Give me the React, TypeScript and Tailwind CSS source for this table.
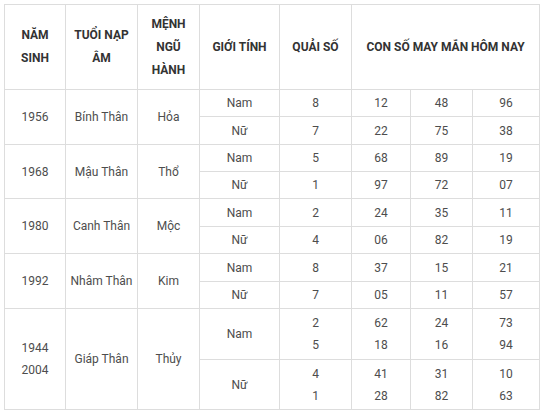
import React from 'react';

type Half = { q: string[]; n: string[][] };
type Row = {
  year: string[];
  nap: string;
  menh: string;
  nam: Half;
  nu: Half;
  h: [string, string];
};

const one = (q: string, a: string, b: string, c: string): Half => ({ q: [q], n: [[a], [b], [c]] });

const rows: Row[] = [
  { year: ['1956'], nap: 'Bính Thân', menh: 'Hỏa', nam: one('8', '12', '48', '96'), nu: one('7', '22', '75', '38'), h: ['h-[27px]', 'h-[28px]'] },
  { year: ['1968'], nap: 'Mậu Thân', menh: 'Thổ', nam: one('5', '68', '89', '19'), nu: one('1', '97', '72', '07'), h: ['h-[27px]', 'h-[27px]'] },
  { year: ['1980'], nap: 'Canh Thân', menh: 'Mộc', nam: one('2', '24', '35', '11'), nu: one('4', '06', '82', '19'), h: ['h-[28px]', 'h-[27px]'] },
  { year: ['1992'], nap: 'Nhâm Thân', menh: 'Kim', nam: one('8', '37', '15', '21'), nu: one('7', '05', '11', '57'), h: ['h-[28px]', 'h-[27px]'] },
  {
    year: ['1944', '2004'], nap: 'Giáp Thân', menh: 'Thủy',
    nam: { q: ['2', '5'], n: [['62', '18'], ['24', '16'], ['73', '94']] },
    nu: { q: ['4', '1'], n: [['41', '28'], ['31', '82'], ['10', '63']] },
    h: ['h-[51px]', 'h-[50px]'],
  },
];

const td = 'border border-[#dddddd] text-center align-middle px-1 py-0 leading-[22px]';
const th = 'border border-[#dddddd] text-center align-middle px-1 py-0 leading-[23px] font-bold text-[#333333]';

function Lines({ items }: { items: string[] }) {
  return (
    <>
      {items.map((t, i) => (
        <div key={i}>{t}</div>
      ))}
    </>
  );
}

export default function App() {
  return (
    <div className="bg-white w-[544px] h-[415px] pt-[4px] pl-[4px] font-['Roboto',sans-serif] text-[12px] text-[#4d4d4d]">
      <table className="table-fixed border-collapse w-[535px]">
        <colgroup>
          <col className="w-[61px]" />
          <col className="w-[72px]" />
          <col className="w-[62px]" />
          <col className="w-[80px]" />
          <col className="w-[72px]" />
          <col className="w-[59px]" />
          <col className="w-[62px]" />
          <col className="w-[67px]" />
        </colgroup>
        <thead>
          <tr className="h-[85px]">
            <th className={th}>NĂM<br />SINH</th>
            <th className={th}>TUỔI NẠP<br />ÂM</th>
            <th className={th}>MỆNH<br />NGŨ<br />HÀNH</th>
            <th className={th}>GIỚI TÍNH</th>
            <th className={th}>QUẢI SỐ</th>
            <th className={th} colSpan={3}>CON SỐ MAY MẮN HÔM NAY</th>
          </tr>
        </thead>
        <tbody>
          {rows.map((r) => (
            <React.Fragment key={r.year.join('-')}>
              <tr className={r.h[0]}>
                <td className={td} rowSpan={2}><Lines items={r.year} /></td>
                <td className={td} rowSpan={2}>{r.nap}</td>
                <td className={td} rowSpan={2}>{r.menh}</td>
                <td className={td}>Nam</td>
                <td className={td}><Lines items={r.nam.q} /></td>
                {r.nam.n.map((c, i) => (
                  <td key={i} className={td}><Lines items={c} /></td>
                ))}
              </tr>
              <tr className={r.h[1]}>
                <td className={td}>Nữ</td>
                <td className={td}><Lines items={r.nu.q} /></td>
                {r.nu.n.map((c, i) => (
                  <td key={i} className={td}><Lines items={c} /></td>
                ))}
              </tr>
            </React.Fragment>
          ))}
        </tbody>
      </table>
    </div>
  );
}
